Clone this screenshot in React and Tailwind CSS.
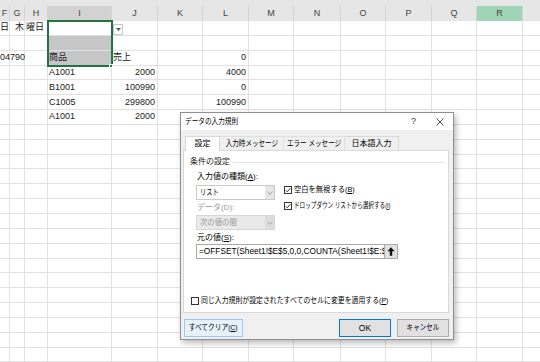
import React from "react";

const letters = ["F", "G", "H", "I", "J", "K", "L", "M", "N", "O", "P", "Q", "R", ""];

const data = {
  1: { 0: ["日", "l0"], 1: ["木", "l5"], 2: ["曜日", "l1"] },
  3: { 0: ["04790", "over"], 3: ["商品", "l1"], 4: ["売上", "l1"], 6: ["0", "r"] },
  4: { 3: ["A1001", "l1"], 4: ["2000", "r"], 6: ["4000", "r"] },
  5: { 3: ["B1001", "l1"], 4: ["100990", "r"], 6: ["0", "r"] },
  6: { 3: ["C1005", "l1"], 4: ["299800", "r"], 6: ["100990", "r"] },
  7: { 3: ["A1001", "l1"], 4: ["2000", "r"] },
};

const alignClass = {
  r: "justify-end pr-[2px]",
  l0: "pl-0",
  l1: "pl-[1px]",
  l5: "pl-[5px]",
  over: "pl-0 relative z-10",
};

function Cell({ r, c }) {
  const v = data[r] && data[r][c];
  const text = v ? v[0] : null;
  const align = v ? alignClass[v[1]] : "pl-[1px]";
  const shaded = c === 3 && (r === 2 || r === 3);
  return (
    <div
      className={
        "h-[14.85px] border-r border-b border-[#e1e1e1] flex items-center text-[9px] leading-none text-[#222] whitespace-nowrap overflow-visible " +
        align +
        " " +
        (shaded ? "bg-[#c6c6c6]" : "bg-white")
      }
    >
      {text}
    </div>
  );
}

function CheckBox({ checked }) {
  return (
    <div className="w-[8px] h-[8px] border border-[#333] bg-white flex items-center justify-center shrink-0">
      {checked && (
        <svg width="6" height="6" viewBox="0 0 6 6">
          <path d="M0.6 3.1 L2.3 4.8 L5.4 1.2" fill="none" stroke="#222" strokeWidth="0.9" />
        </svg>
      )}
    </div>
  );
}

function Chevron({ color = "#888" }) {
  return (
    <svg width="6" height="4" viewBox="0 0 6 4">
      <path d="M0.5 0.8 L3 3.2 L5.5 0.8" fill="none" stroke={color} strokeWidth="0.8" />
    </svg>
  );
}

export default function App() {
  const rows = Array.from({ length: 23 }, (_, i) => i + 1);
  return (
    <div className="relative w-[540px] h-[362px] overflow-hidden bg-white font-['Liberation_Sans','Noto_Sans_CJK_JP',sans-serif]">
      {/* header strip */}
      <div className="h-[21px] bg-[#e6e6e6] pt-[6px]">
        <div className="grid grid-cols-[10px_15px_23px_64px_46px_45px_46px_45px_47px_45px_46px_45px_46px_46px] h-[15px]">
          {letters.map((l, i) => (
            <div
              key={i}
              className={
                "flex items-center justify-center text-[9px] text-[#444] border-r border-[#d4d4d4] " +
                (l === "I" ? "bg-[#d2d2d2]" : l === "R" ? "bg-[#9fd5b6]" : "")
              }
            >
              {l}
            </div>
          ))}
        </div>
      </div>
      {/* grid */}
      <div className="grid grid-cols-[10px_15px_23px_64px_46px_45px_46px_45px_47px_45px_46px_45px_46px_46px]">
        {rows.map((r) => letters.map((_, c) => <Cell key={r + "-" + c} r={r} c={c} />))}
      </div>

      {/* selection overlay */}
      <div className="absolute left-[47px] top-[20px] w-[66px] h-[47px] border-2 border-[#217346]" />
      <div className="absolute left-[109px] top-[64px] w-[4px] h-[4px] bg-[#217346] border border-white" />
      {/* dropdown button */}
      <div className="absolute left-[113px] top-[24px] w-[10px] h-[11px] bg-white border border-[#c8c8c8] flex items-center justify-center">
        <svg width="5" height="3" viewBox="0 0 5 3">
          <path d="M0 0 L5 0 L2.5 3 Z" fill="#555" />
        </svg>
      </div>

      {/* dialog */}
      <div className="absolute left-[180px] top-[112px] w-[274px] h-[228px] bg-[#f0f0f0] border border-[#8f8f8f] shadow-[2px_3px_6px_rgba(0,0,0,0.28)] text-[8px] leading-none text-black">
        <div className="h-[17px] bg-white flex items-center pl-[4px] pr-[9px]">
          <span className="inline-block whitespace-nowrap origin-left scale-x-[0.83]">データの入力規則</span>
          <span className="ml-auto text-[9px] text-[#333] mr-[20px]">?</span>
          <svg width="8" height="8" viewBox="0 0 8 8">
            <path d="M0.5 0.5 L7.5 7.5 M7.5 0.5 L0.5 7.5" stroke="#333" strokeWidth="0.9" />
          </svg>
        </div>
        <div className="px-[2px] pt-[5px]">
          {/* tabs */}
          <div className="flex pl-[2px] h-[15px] items-end">
            <div className="h-[15px] w-[35px] bg-white border border-[#d9d9d9] border-b-0 flex items-center justify-center relative z-10 -mb-px">
              設定
            </div>
            <div className="h-[14px] w-[64px] border-t border-r border-[#e0e0e0] flex items-center justify-center whitespace-nowrap">
              <span className="inline-block whitespace-nowrap scale-x-[0.82]">入力時メッセージ</span>
            </div>
            <div className="h-[14px] w-[61px] border-t border-r border-[#e0e0e0] flex items-center justify-center whitespace-nowrap">
              <span className="inline-block whitespace-nowrap scale-x-[0.82]">エラー メッセージ</span>
            </div>
            <div className="h-[14px] w-[54px] border-t border-r border-[#d9d9d9] flex items-center justify-center whitespace-nowrap">
              日本語入力
            </div>
          </div>
          {/* pane */}
          <div className="w-[266px] h-[163px] bg-white border border-[#d9d9d9] pt-[4px] pl-[6px]">
            <div className="flex items-center h-[14px] pr-[4px]">
              <span className="text-[#222]">条件の設定</span>
              <div className="flex-1 h-px bg-[#e3e3e3] ml-[3px]" />
            </div>
            <div className="pl-[6px] flex mt-[2px]">
              <div className="w-[79px] shrink-0">
                <div className="h-[12px] flex items-center pl-[1px] whitespace-nowrap">
                  入力値の種類(<span className="underline">A</span>):
                </div>
                <div className="mt-[2px] h-[15px] border border-[#c9c9c9] bg-white flex">
                  <div className="flex-1 flex items-center pl-[3px]">
                    <span className="inline-block whitespace-nowrap origin-left scale-x-[0.78]">リスト</span>
                  </div>
                  <div className="w-[9px] bg-[#e6e6e6] flex items-center justify-center">
                    <Chevron />
                  </div>
                </div>
                <div className="mt-[2px] h-[12px] flex items-center pl-[1px] text-[#9a9a9a]">データ(D):</div>
                <div className="mt-[1px] h-[15px] border border-[#d6d6d6] bg-[#e9e9e9] flex">
                  <div className="flex-1 flex items-center pl-[3px] text-[#9a9a9a]">
                    <span className="inline-block whitespace-nowrap origin-left scale-x-[0.92]">次の値の間</span>
                  </div>
                  <div className="w-[9px] bg-[#dcdcdc] flex items-center justify-center">
                    <Chevron color="#999" />
                  </div>
                </div>
              </div>
              <div className="pl-[9px] pt-[12px]">
                <div className="h-[14px] flex items-center gap-[2px]">
                  <CheckBox checked />
                  <span className="inline-block whitespace-nowrap origin-left scale-x-[0.91]">
                    空白を無視する(<span className="underline">B</span>)
                  </span>
                </div>
                <div className="mt-[2px] h-[14px] flex items-center gap-[2px]">
                  <CheckBox checked />
                  <span className="inline-block whitespace-nowrap origin-left scale-x-[0.7]">
                    ドロップダウン リストから選択する(<span className="underline">I</span>)
                  </span>
                </div>
              </div>
            </div>
            <div className="pl-[7px] mt-[2px] h-[12px] flex items-center">
              元の値(<span className="underline">S</span>):
            </div>
            <div className="ml-[6px] w-[202px] h-[15px] flex">
              <div className="flex-1 border border-[#a9a9a9] bg-white flex items-center pl-[2px] overflow-hidden whitespace-nowrap text-[8.3px] font-['Liberation_Sans',sans-serif]">
                =OFFSET(Sheet1!$E$5,0,0,COUNTA(Sheet1!$E:$E)-1,1)
              </div>
              <div className="w-[13px] bg-[#e1e1e1] border border-l-0 border-[#a9a9a9] flex items-center justify-center">
                <svg width="8" height="9" viewBox="0 0 8 9">
                  <path d="M4 0.3 L7.6 4.2 L5.2 4.2 L5.2 8.7 L2.8 8.7 L2.8 4.2 L0.4 4.2 Z" fill="#111" />
                </svg>
              </div>
            </div>
            <div className="mt-[35px] h-[14px] flex items-center gap-[2px] pl-[1px]">
              <CheckBox />
              <span className="inline-block whitespace-nowrap origin-left scale-x-[0.86]">
                同じ入力規則が設定されたすべてのセルに変更を適用する(<span className="underline">P</span>)
              </span>
            </div>
          </div>
          {/* buttons */}
          <div className="mt-[6px] flex items-center pl-[1px] pr-[2px]">
            <div className="w-[59px] h-[18px] bg-[#e5f1fb] border border-[#9cc8ee] flex items-center justify-center whitespace-nowrap">
              <span className="inline-block whitespace-nowrap scale-x-[0.84]">
                すべてクリア(<span className="underline">C</span>)
              </span>
            </div>
            <div className="ml-auto w-[52px] h-[18px] bg-[#e1e1e1] border border-[#0078d7] flex items-center justify-center font-['Liberation_Sans',sans-serif] text-[8.5px]">
              OK
            </div>
            <div className="ml-[6px] w-[52px] h-[18px] bg-[#e1e1e1] border border-[#adadad] flex items-center justify-center">
              <span className="inline-block whitespace-nowrap scale-x-[0.82]">キャンセル</span>
            </div>
          </div>
        </div>
      </div>
    </div>
  );
}
